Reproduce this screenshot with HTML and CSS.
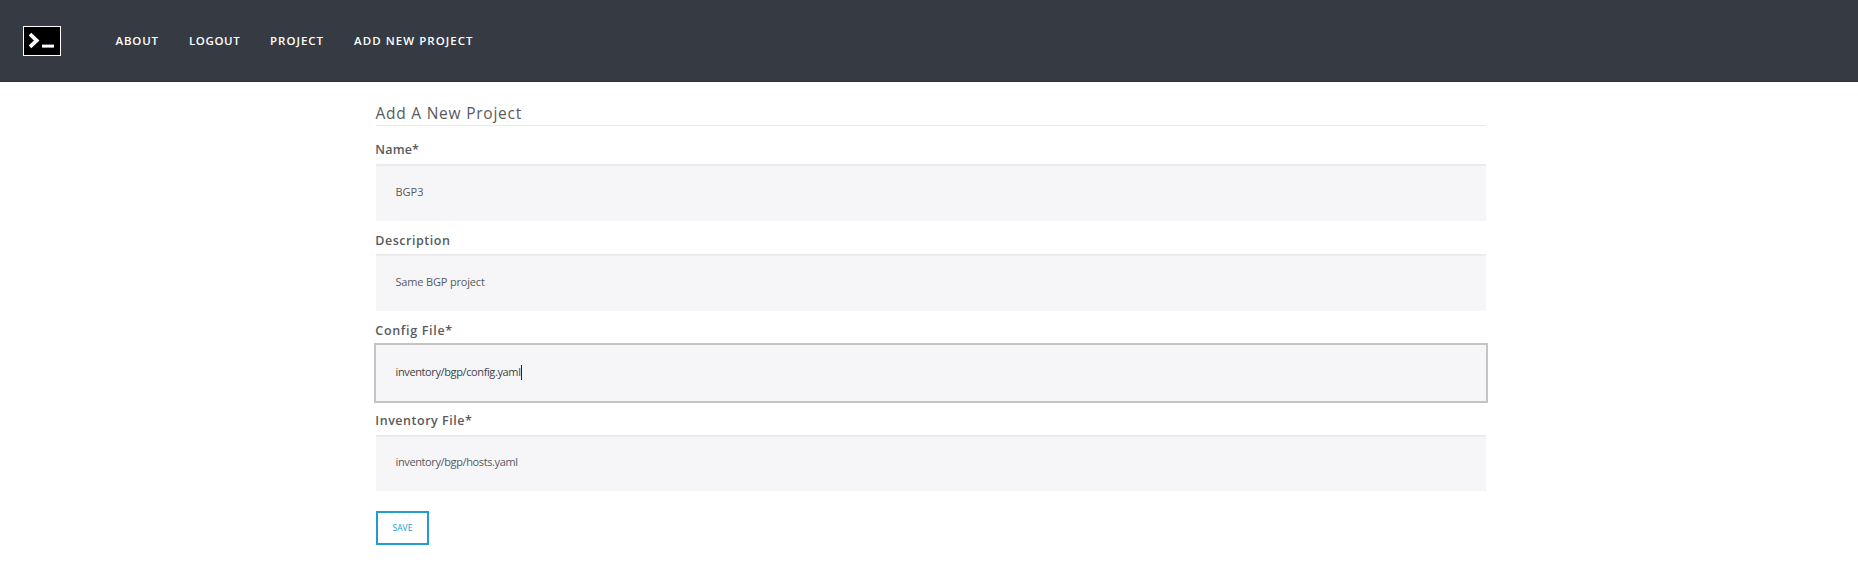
FILE: index.html
```
<!DOCTYPE html>
<html lang="en">
<head>
<meta charset="utf-8">
<title>Add A New Project</title>
<link rel="stylesheet" href="styles.css">
</head>
<body>
<header class="topbar">
  <svg class="logo" width="38" height="30" viewBox="0 0 38 30">
    <rect x=".5" y=".5" width="37" height="29" fill="#000" stroke="#fff"/>
    <path d="M7 8.2 L13.7 14.5 L7 20.8" fill="none" stroke="#fff" stroke-width="3.8"/>
    <rect x="19" y="18.6" width="12" height="3" fill="#fff"/>
  </svg>
  <nav class="nav">
    <a class="nav-about">ABOUT</a>
    <a class="nav-logout">LOGOUT</a>
    <a class="nav-project">PROJECT</a>
    <a class="nav-add">ADD NEW PROJECT</a>
  </nav>
</header>
<main class="form">
  <h1 class="title"><span>Add A New Project</span></h1>
  <div class="group">
    <label class="label label-name">Name*</label>
    <div class="field"><span class="value-name">BGP3</span></div>
  </div>
  <div class="group">
    <label class="label label-description">Description</label>
    <div class="field"><span class="value-description">Same BGP project</span></div>
  </div>
  <div class="group">
    <label class="label label-config">Config File*</label>
    <div class="field focused"><span class="value-config">inventory/bgp/config.yaml</span><i class="caret"></i></div>
  </div>
  <div class="group group-inventory">
    <label class="label label-inventory">Inventory File*</label>
    <div class="field"><span class="value-inventory">inventory/bgp/hosts.yaml</span></div>
  </div>
  <button class="save"><span>SAVE</span></button>
</main>
</body>
</html>
```
FILE: styles.css
```
* { box-sizing: border-box; }
body { margin: 0; background: #fff; color: #585a5d; font-family: "Open Sans", sans-serif; }
.topbar { display: flex; align-items: center; height: 82px; padding-left: 23px; background: #363b43; border-bottom: 1px solid #303239; }
.logo { display: block; }
.nav { display: flex; gap: 30px; margin-left: 54.5px; color: #fff; font-size: 11.5px; font-weight: 600; line-height: 20px; letter-spacing: .8px; white-space: nowrap; }
.nav-about { width: 43.5px; }
.nav-logout { width: 51px; letter-spacing: .6px; }
.nav-project { width: 54px; letter-spacing: 1px; }
.nav-add { letter-spacing: 1.05px; }
.form { width: 1110px; margin-left: 376px; padding-top: 19px; }
.title { height: 25px; margin: 0 0 12px; border-bottom: 1px solid #e9e9e9; font-size: 15.5px; font-weight: 400; line-height: 24px; letter-spacing: .76px; text-indent: -.5px; }
.group { height: 90px; }
.label { display: block; height: 26px; font-size: 12.5px; font-weight: 600; line-height: 26px; letter-spacing: .53px; text-indent: -.7px; }
.label-name { line-height: 23px; letter-spacing: .15px; }
.label-config { letter-spacing: .68px; }
.group-inventory .label { height: 27px; }
.group-inventory .field { height: 56px; padding-bottom: 3px; }
.field { display: flex; align-items: center; height: 57px; padding: 0 20px 2px 19.5px; background: #f6f6f9; box-shadow: inset 0 1px 1px rgba(0, 0, 0, .04); border-top: 1px solid #e9e9e9; font-size: 11px; line-height: 16px; white-space: nowrap; }
.focused { outline: 2px solid #c4c4c4; margin-top: 1px; height: 56px; border: 0; box-shadow: none; color: #3f4246; }
.value-description { letter-spacing: -.17px; }
.value-config, .value-inventory { letter-spacing: -.38px; }
.caret { width: 1px; height: 15px; background: #222; }
.save { display: flex; align-items: center; justify-content: center; width: 53px; height: 34px; margin-top: 13px; padding: 0; border: 2px solid #219bd1; background: #fff; color: #219bd1; font: 8.5px/12px "Open Sans", sans-serif; }
```
